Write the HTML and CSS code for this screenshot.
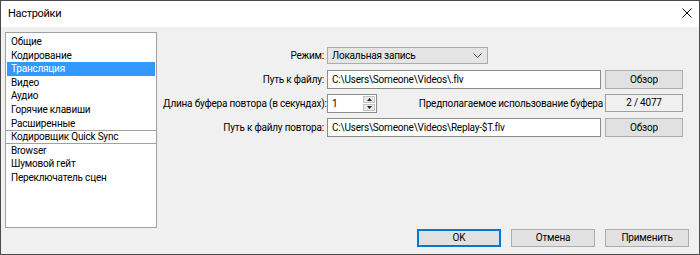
FILE: index.html
```html
<!DOCTYPE html>
<html lang="ru">
<head>
<meta charset="utf-8">
<title>Настройки</title>
<link rel="stylesheet" href="styles.css">
</head>
<body>
<div class="window">
  <div class="titlebar">
    <span class="title">Настройки</span>
    <svg class="close" width="10" height="10" viewBox="0 0 10 10"><path d="M0.5 0.5 L9.5 9.5 M9.5 0.5 L0.5 9.5" stroke="#000" stroke-width="1" fill="none"/></svg>
  </div>
  <div class="content">
    <div class="main">
      <ul class="list">
        <li>Общие</li>
        <li>Кодирование</li>
        <li class="selected">Трансляция</li>
        <li>Видео</li>
        <li>Аудио</li>
        <li>Горячие клавиши</li>
        <li>Расширенные</li>
        <li class="group">Кодировщик Quick Sync</li>
        <li>Browser</li>
        <li>Шумовой гейт</li>
        <li>Переключатель сцен</li>
      </ul>
      <div class="form">
        <span class="lbl">Режим:</span>
        <div class="select">
          <span>Локальная запись</span>
          <svg class="chev" width="9" height="5" viewBox="0 0 9 5"><path d="M0.5 0.5 L4.5 4.5 L8.5 0.5" stroke="#444" stroke-width="1" fill="none"/></svg>
        </div>
        <span></span>

        <span class="lbl">Путь к файлу:</span>
        <div class="input">C:\Users\Someone\Videos\.flv</div>
        <div class="btn">Обзор</div>

        <span class="lbl">Длина буфера повтора (в секундах):</span>
        <div class="buffer-row">
          <div class="spin">
            <span class="spin-val">1</span>
            <div class="spin-btns">
              <span class="spin-btn"><svg width="5" height="3" viewBox="0 0 5 3"><path d="M2.5 0 L5 3 L0 3 Z" fill="#222"/></svg></span>
              <span class="spin-btn"><svg width="5" height="3" viewBox="0 0 5 3"><path d="M0 0 L5 0 L2.5 3 Z" fill="#222"/></svg></span>
            </div>
          </div>
          <span class="est">Предполагаемое использование буфера</span>
        </div>
        <div class="readout">2 / 4077</div>

        <span class="lbl">Путь к файлу повтора:</span>
        <div class="input">C:\Users\Someone\Videos\Replay-$T.flv</div>
        <div class="btn">Обзор</div>
      </div>
    </div>
    <div class="footer">
      <div class="btn wide default">OK</div>
      <div class="btn wide">Отмена</div>
      <div class="btn wide">Применить</div>
    </div>
  </div>
</div>
</body>
</html>
```

FILE: styles.css
```css
html, body {
  margin: 0;
  padding: 0;
  background: #f0f0f0;
}

body {
  font-family: Roboto, "Noto Sans", sans-serif;
  font-size: 10px;
  letter-spacing: -0.2px;
  color: #000;
}

.window {
  width: 700px;
  height: 255px;
  box-sizing: border-box;
  border: 1px solid #4a4a4a;
  background: #f0f0f0;
  display: flex;
  flex-direction: column;
}

.titlebar {
  height: 26px;
  flex: none;
  background: #fff;
  display: flex;
  align-items: center;
  justify-content: space-between;
  padding: 0 7px 0 7px;
}

.title {
  font-size: 11px;
  letter-spacing: -0.3px;
  margin-top: -1px;
}

.close {
  margin-top: -3px;
}

.content {
  flex: 1;
  display: flex;
  flex-direction: column;
  padding: 5px 10px 0 4px;
  gap: 1px;
}

.main {
  display: flex;
  gap: 6px;
}

.list {
  width: 152px;
  height: 196px;
  box-sizing: border-box;
  margin: 0;
  padding: 2px 1px;
  list-style: none;
  background: #fff;
  border: 1px solid #a0a0a0;
}

.list li {
  height: 13.6px;
  line-height: 12.6px;
  padding-top: 1px;
  padding-left: 4px;
  white-space: nowrap;
  box-sizing: border-box;
}

.list li.selected {
  background: #3399ff;
  color: #fff;
}

.list li.group {
  border-top: 1px solid #a0a0a0;
  border-bottom: 1px solid #a0a0a0;
  line-height: 11.6px;
  padding-top: 0;
  margin: 0 -1px;
  padding-left: 5px;
}

.form {
  padding-top: 11px;
  display: grid;
  grid-template-columns: 164px 278px 78px;
  grid-template-rows: repeat(4, 24px);
  align-items: center;
  align-content: start;
}

.lbl {
  text-align: right;
  padding-right: 3px;
  white-space: nowrap;
}

.select {
  width: 161px;
  height: 17px;
  box-sizing: border-box;
  background: #e5e5e5;
  border: 1px solid #acacac;
  display: flex;
  align-items: center;
  justify-content: space-between;
  padding: 0 5px 0 4px;
  line-height: 15px;
}

.input {
  width: 274px;
  height: 19px;
  box-sizing: border-box;
  background: #fff;
  border: 1px solid #8c8c8c;
  padding-left: 4px;
  line-height: 17px;
  white-space: nowrap;
}

.btn {
  height: 19px;
  box-sizing: border-box;
  background: #e1e1e1;
  border: 1px solid #adadad;
  text-align: center;
  line-height: 17px;
}

.buffer-row {
  width: 276px;
  display: flex;
  align-items: center;
  justify-content: space-between;
}

.spin {
  width: 50px;
  height: 19px;
  box-sizing: border-box;
  background: #fff;
  border: 1px solid #8c8c8c;
  display: flex;
  align-items: stretch;
  justify-content: space-between;
  padding: 1px;
}

.spin-val {
  padding-left: 3px;
  line-height: 15px;
}

.spin-btns {
  width: 12px;
  display: flex;
  flex-direction: column;
  gap: 1px;
}

.spin-btn {
  flex: 1;
  background: #e8e8e8;
  border: 1px solid #c4c4c4;
  display: flex;
  align-items: center;
  justify-content: center;
}

.est {
  white-space: nowrap;
}

.readout {
  height: 18px;
  box-sizing: border-box;
  border: 1px solid #a0a0a0;
  text-align: center;
  line-height: 16px;
}

.footer {
  display: flex;
  justify-content: flex-end;
  gap: 10px;
}

.btn.wide {
  width: 84px;
  height: 18px;
  line-height: 16px;
}

.btn.default {
  border-color: #0078d7;
  box-shadow: inset 0 0 0 1px #0078d7;
}
```
